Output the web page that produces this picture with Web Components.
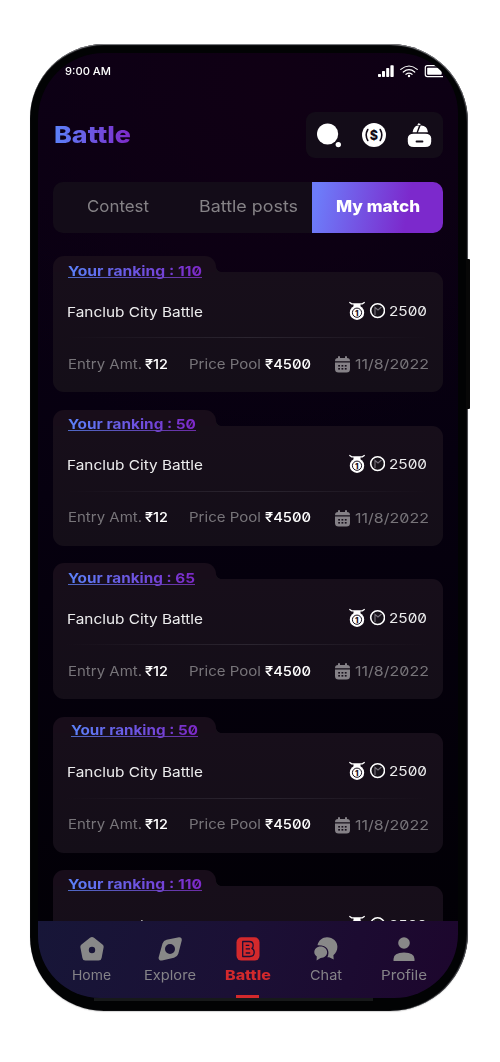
<!DOCTYPE html>
<html lang="en">
<head>
<meta charset="utf-8">
<title>Battle</title>
<style>
html,body{margin:0;background:#fff}
body{width:500px;height:1062px;overflow:hidden;font-family:Inter,"Liberation Sans",sans-serif;font-feature-settings:"zero" 1}
</style>
</head>
<body>
<battle-phone></battle-phone>
<script>
const define = (name, html, setup) => customElements.define(name, class extends HTMLElement {
  connectedCallback() {
    if (this.shadowRoot) return;
    const t = document.createElement('template');
    t.innerHTML = typeof html === 'function' ? html(this) : html;
    this.attachShadow({mode: 'open'}).append(t.content.cloneNode(true));
    if (setup) setup(this);
  }
});

define('battle-phone', `
<style>
:host{display:block;width:500px;height:1062px;box-sizing:border-box;padding:44px 0 0 30px;background:#fff}
.frame{position:relative;box-sizing:border-box;width:438px;height:967px;padding:9px 10px 13px 8px;border-radius:74px 78px 78px 74px;background:#020304;box-shadow:inset 0 1.5px 1px -.5px #85858a,inset -1px 0 1px #55555a,0 1px 1px #9996}
.key{position:absolute;left:436px;top:215px;width:4px;height:150px;background:#080808;border-radius:0 1px 1px 0}
.lip{position:absolute;left:64px;top:953px;width:279px;height:4px;background:#17191a}
.screen{position:relative;display:flex;flex-direction:column;width:420px;height:945px;overflow:hidden;border-radius:66px 60px 64px 62px;
background:radial-gradient(circle at 55% 4%,#100014 0,transparent 38%),linear-gradient(175deg,#0b0015 0,#06000f 45%,#010004 100%);}
header{display:flex;justify-content:space-between;align-items:center;height:46px;margin:23px 15px 24px 16px}
h1{margin:0;font-size:23px;line-height:45px;font-weight:800}
.cards{flex:1;min-height:0;overflow:hidden;padding:23px 15px 0;display:flex;flex-direction:column;gap:17.5px}
</style>
<div class="frame"><div class="lip"></div><div class="key"></div>
<div class="screen">
<status-bar></status-bar>
<header><h1><fit-text w="77" class="g" grad>Battle</fit-text></h1><action-box></action-box></header>
<tab-strip></tab-strip>
<div class="cards">
<match-card rank="110" w="134"></match-card>
<match-card rank="50" w="128" lh="28"></match-card>
<match-card rank="65" w="127"></match-card>
<match-card rank="50" w="127" lh="27" shift="3"></match-card>
<match-card rank="110" w="134" lh="28" peek></match-card>
</div>
<bottom-nav></bottom-nav>
</div></div>`);

define('status-bar', `
<style>
:host{display:flex;justify-content:space-between;align-items:center;height:36px;flex:none;padding:0 15px 0 27px;color:#fff;font-size:11px;font-weight:500;font-feature-settings:normal}
svg{display:block}
</style>
<fit-text w="46">9:00 AM</fit-text>
<svg width="66" height="14" viewBox="377 64 66 14" fill="#fff">
<rect x="378" y="74" width="3" height="3" rx=".7"/><rect x="382" y="71" width="3" height="6" rx=".7"/><rect x="386.2" y="68" width="3" height="9" rx=".7"/><rect x="390.4" y="65.3" width="3.3" height="11.7" rx=".7"/>
<g fill="none" stroke="#fff" stroke-width="1.2" stroke-linecap="round"><path d="M400.8 69.4Q409 62.6 417.2 69.4M403.3 72Q409 67.4 414.7 72M406 74.3Q409 72 412 74.3"/></g><circle cx="409" cy="76" r="1.2"/>
<rect x="425.3" y="65.6" width="19" height="11" rx="2" fill="none" stroke="#fff" stroke-width="1.2"/><rect x="427.2" y="67.7" width="14.5" height="7" rx=".8"/>
</svg>`);

define('action-box', `
<style>:host{display:block;width:137px;height:46px;border-radius:9px;background:#130c18}svg{display:block}text{font:800 12.5px Inter,sans-serif}</style>
<svg width="137" height="46" viewBox="306 112 137 46" fill="#fff">
<circle cx="327.6" cy="134" r="10.6"/><circle cx="338.3" cy="144.6" r="2.7"/>
<circle cx="374" cy="135" r="12"/>
<g fill="none" stroke="#130c18" stroke-width="1.6" stroke-linecap="round"><path d="M367.800 129.500Q364.600 135 367.800 140.500M380.200 129.500Q383.400 135 380.200 140.500"/></g>
<text x="374" y="139.500" text-anchor="middle" fill="#130c18">$</text>
<path d="M413.800 133.700h11.400q6 0 6 4.800v3q0 5.500-6 5.500h-11.400q-6 0-6-5.500v-3q0-4.800 6-4.800z"/>
<path d="M412.600 132.300q.9-5.500 4.200-6.600l2.200-.3-2.400 6.900zM418 132.300l2.700-6.700q6.500-.2 7.300 6.700zM417.300 124.700l1.100-1.500 2.300.7-.6 1.400z"/>
<path d="M416.500 141.500h6" stroke="#130c18" stroke-width="1.800" stroke-linecap="round"/>
</svg>`);

define('tab-strip', `
<style>
:host{display:grid;grid-template-columns:129px 130px 131px;height:51px;flex:none;margin:0 15px;border-radius:10px;overflow:hidden;background:#130c18;color:#858286;font-size:16.5px;line-height:49px;white-space:nowrap}
div{display:flex;justify-content:center}
.on{background:linear-gradient(100deg,#6d7cf9 5%,#7c29cc 72%);color:#fff;font-weight:800}
.mid{padding-left:2px}
</style>
<div><fit-text w="62">Contest</fit-text></div><div class="mid"><fit-text w="99">Battle posts</fit-text></div><div class="on"><fit-text w="84">My match</fit-text></div>`);

define('match-card', el => `
<style>
:host{display:block;height:136px;flex:none;color:#ececed;font-size:13.5px;white-space:nowrap}
.tab{box-sizing:border-box;position:relative;width:163px;height:16px;padding-left:${15 + +(el.getAttribute('shift') || 0)}px;border-radius:11px 11px 0 0;background:#180d1a;line-height:${el.getAttribute('lh') || 30}px;font-size:13.5px;font-weight:700}
.tab:after{content:"";position:absolute;left:163px;top:11px;width:5px;height:5px;background:radial-gradient(circle at 100% 0,transparent 4.5px,#160f19 5px)}
.body{box-sizing:border-box;height:120px;border-radius:0 11px 11px 11px;background:linear-gradient(#170e1a,#140e18);padding:0 14px}
.top{display:flex;justify-content:space-between;align-items:center;height:65px}
.top .name{margin-top:14px}
.prize{display:flex;align-items:center;margin:12px 2px 0 0}
.prize svg{margin-right:4px}
hr{margin:0;border:0;height:1px;background:linear-gradient(90deg,transparent,#2b2530 50%,transparent)}
.bottom{display:flex;align-items:center;height:51px;color:#777479;padding-left:1px}
.val{color:#fff;font-weight:500;margin:0 21px 0 3px}
.pool{margin:0 24px 0 4px}
.cal{margin-right:5px;margin-top:2px}
.date{margin-top:1px}
svg{display:block;flex:none}
text{font:800 8px Inter,sans-serif}
</style>
<div class="tab"><fit-text grad line w="${el.getAttribute('w')}">Your ranking : ${el.getAttribute('rank')}</fit-text></div>
<div class="body">
<div class="top"><fit-text class="name" w="136">Fanclub City Battle</fit-text>
<div class="prize"><svg width="36" height="20" viewBox="349 301 36 20">
<path d="M349.300 302.200l2.400 1.600h10.600l2.400-1.600" fill="none" stroke="#fff" stroke-width="1.300"/><path d="M353.500 304h7v4h-7z" fill="#fff"/><circle cx="357" cy="312.700" r="7.200" fill="#fff"/><circle cx="357" cy="312.700" r="4.600" fill="none" stroke="#17101c" stroke-width="1"/><text x="356.700" y="315.600" text-anchor="middle" fill="#17101c">1</text>
<circle cx="377.600" cy="310.600" r="6.900" fill="#17121a" stroke="#fff" stroke-width="1.600"/><path d="M375 315v-7.500l3 2.500 3.500-3" fill="none" stroke="#77717b" stroke-width="1.100"/></svg><fit-text w="38">2500</fit-text></div></div>
${el.hasAttribute('peek') ? '' : `<hr>
<div class="bottom"><fit-text w="74">Entry Amt.</fit-text><fit-text class="val" w="23">₹12</fit-text><fit-text w="72">Price Pool</fit-text><fit-text class="val pool" w="46">₹4500</fit-text>
<svg class="cal" width="15" height="17" viewBox="0 0 15 17"><path d="M3 2V1a1 1 0 012 0v1h5V1a1 1 0 012 0v1c2 0 3 1 3 3.300H0C0 3 1 2 3 2zM0 6.500h15V13q0 3.500-3.500 3.500h-8Q0 16.500 0 13z" fill="#858187"/><g fill="#17101b"><rect x="3.200" y="9" width="1.800" height="1.600"/><rect x="6.500" y="9" width="1.800" height="1.600"/><rect x="9.800" y="9" width="1.800" height="1.600"/><rect x="3.200" y="12" width="1.800" height="1.600"/><rect x="6.500" y="12" width="1.800" height="1.600"/><rect x="9.800" y="12" width="1.800" height="1.600"/></g></svg>
<fit-text class="date" w="74">11/8/2022</fit-text></div>`}
</div>`);

define('bottom-nav', `
<style>
:host{box-sizing:border-box;display:grid;grid-template-columns:repeat(5,78px);justify-content:center;flex:none;height:77px;padding-right:1px;background:linear-gradient(105deg,#171638 0,#1b1035 48%,#1d062d 100%)}
</style>
<nav-item label="Home" w="39"><svg width="24" height="24" viewBox="0 0 24 24"><path fill-rule="evenodd" d="M10 .8q2-1.400 4 0l8.500 6.600q1.500 1.200 1.100 3l-2 10.600q-.4 2.500-3 2.500H5.400q-2.600 0-3-2.500l-2-10.600q-.4-1.800 1.100-3zM12 9.800a3.200 3.200 0 100 6.400 3.200 3.200 0 000-6.400z"/></svg></nav-item>
<nav-item label="Explore" w="52"><svg width="24" height="24" viewBox="0 0 24 24"><path fill-rule="evenodd" d="M21 .2L8.600 2.800Q5.500 3.600 4.500 6.500L.6 20.500Q.3 23.800 4 23.600l12-2.800q3.300-.8 4.300-4L23.800 3.300Q24 .1 21 .2zM12 7a5 5 0 110 10 5 5 0 010-10z"/></svg></nav-item>
<nav-item label="Battle" w="46" on><svg width="24" height="24" viewBox="0 0 24 24"><rect x=".5" y=".2" width="23" height="23.400" rx="5"/><path d="M6.700 4.500h6.500q4 0 4 3.700 0 2.300-1.300 3.200 2.300 1 2.300 3.900 0 4.200-4.400 4.200H6.700zM9.700 8.300h3.600M9.700 11.900h4.300M9.700 16h4.500" fill="none" stroke="#1b1035" stroke-width="1.300" stroke-linejoin="round"/></svg></nav-item>
<nav-item label="Chat" w="32"><svg width="24" height="24" viewBox="0 0 24 24"><path d="M3.500 8.200C4.500 3.200 8.500.2 13 .2c6 0 10.400 4.300 10.400 9.600 0 3.800-1.500 6.100-4 8.400l.3 4.300-4.500-2.300q-1 .2-1.800.1c2.800-6.100.4-12.500-9.900-12.100z"/><path d="M6.600 9.600c3.800 0 6.500 2.500 6.500 5.700s-2.700 5.700-6.500 5.700l-4 2.500.2-4C1.200 18.400.3 17 .3 15.300c0-3.200 2.500-5.700 6.300-5.700z"/></svg></nav-item>
<nav-item label="Profile" w="46"><svg width="24" height="24" viewBox="0 0 24 24"><circle cx="12" cy="6" r="5.800"/><path d="M1.500 24v-2q0-6.500 10.500-6.500T22.500 22v2z"/></svg></nav-item>`);

define('nav-item', el => `
<style>
:host{display:flex;flex-direction:column;align-items:center;justify-content:space-between;height:77px;box-sizing:border-box;padding-top:16px;color:#858388;font-size:13.5px;fill:#888}
:host([on]){color:#d3292c;fill:#d3292c;font-weight:800}
.l{line-height:20px;margin-top:4px}
.bar{width:23px;height:3px;margin-top:auto}
:host([on]) .bar{background:#d3292c}
</style>
<slot></slot><div class="l"><fit-text w="${el.getAttribute('w')}">${el.getAttribute('label')}</fit-text></div><div class="bar"></div>`);

/* Stretches its run of text horizontally to fill the width in "w". */
define('fit-text', `
<style>
:host{display:inline-block;white-space:nowrap}
span{display:inline-block;transform-origin:0 50%}
:host([grad]) span{background:linear-gradient(90deg,#5b82fa,#7e28c8);-webkit-background-clip:text;background-clip:text;color:transparent}
:host([line]){position:relative}
:host([line]):after{content:"";position:absolute;left:0;right:0;top:calc(50% + 6px);height:1px;background:linear-gradient(90deg,#5573d8,#7430b4)}
:host([line]):host:after{opacity:.9}
</style><span><slot></slot></span>`, el => {
  const s = el.shadowRoot.querySelector('span'), w = +el.getAttribute('w');
  const natural = s.getBoundingClientRect().width;
  el.style.width = w + 'px';
  s.style.transform = `scaleX(${w / natural})`;
});
customElements.whenDefined('fit-text');
</script>
</body>
</html>
